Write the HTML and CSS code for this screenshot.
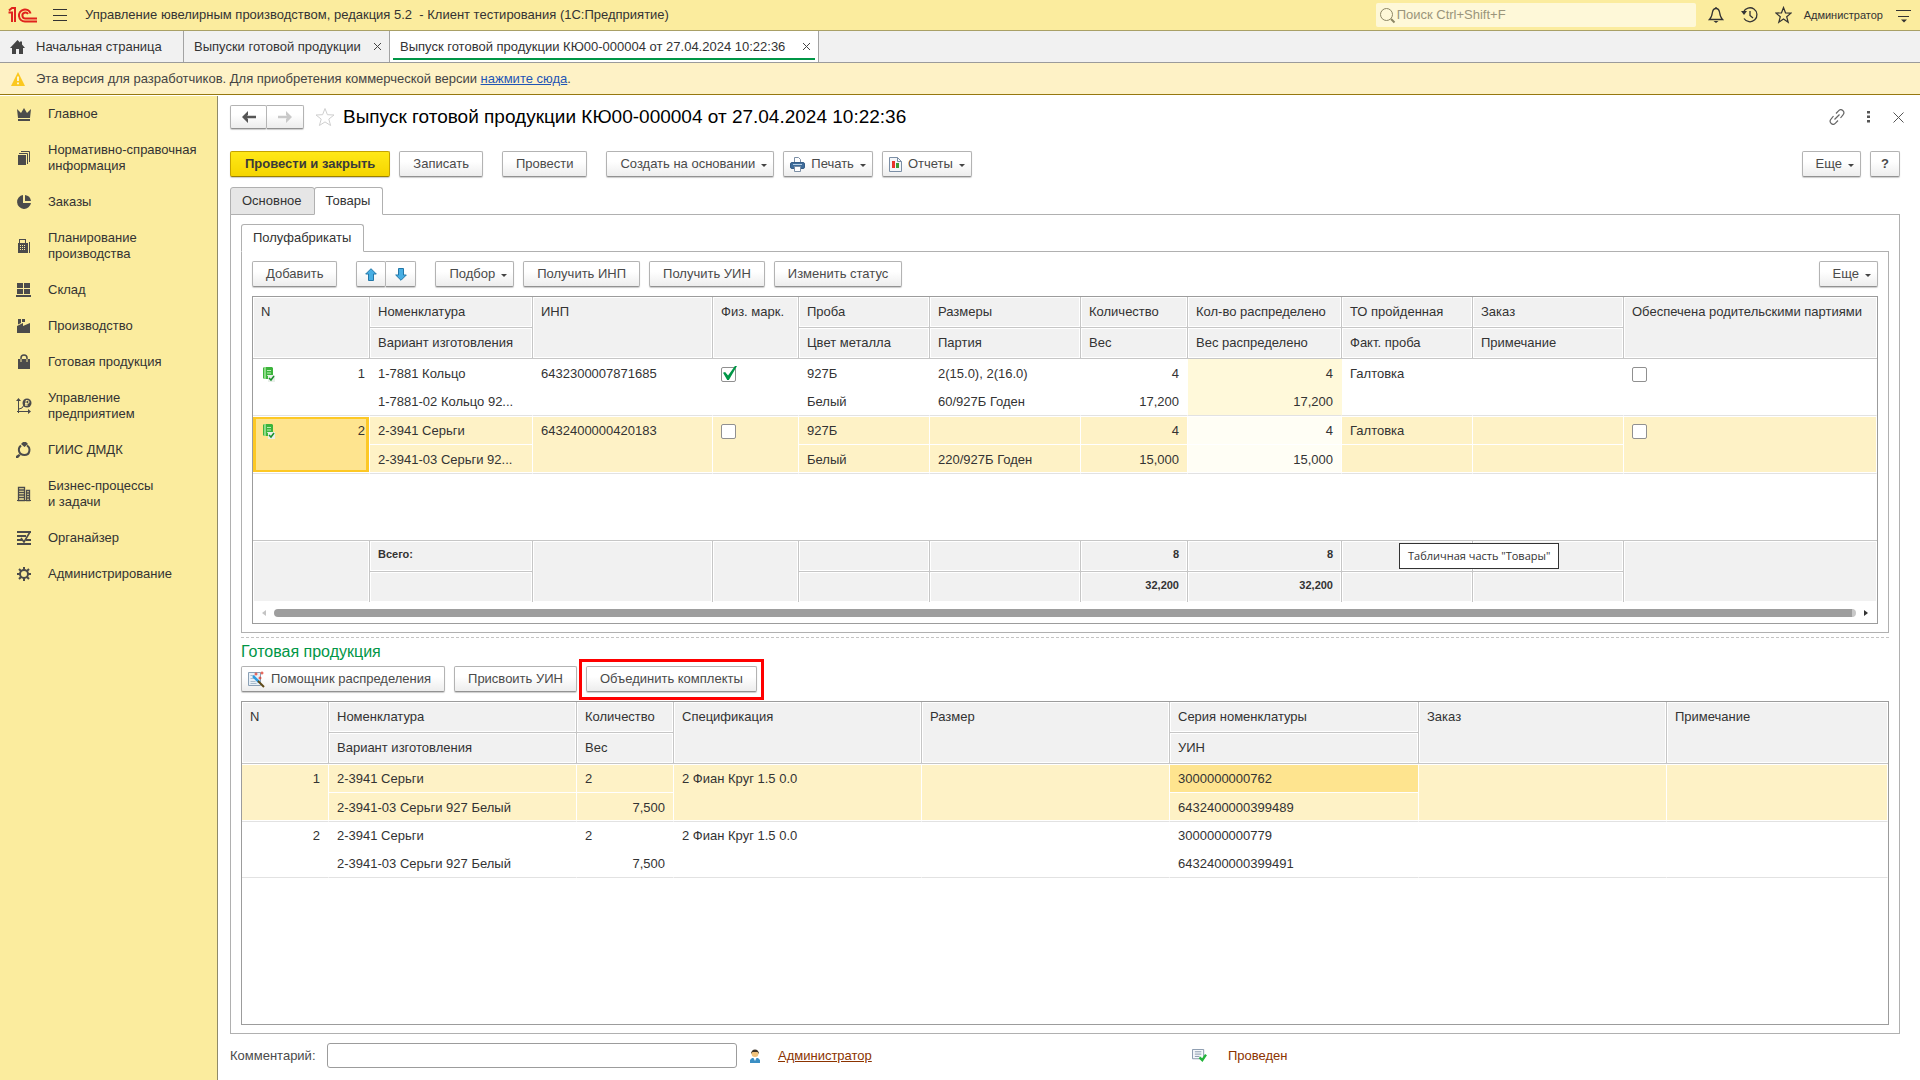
FILE: index.html
```html
<!DOCTYPE html>
<html lang="ru">
<head>
<meta charset="utf-8">
<title>Выпуск готовой продукции КЮ00-000004</title>
<link rel="stylesheet" href="styles.css">
</head>
<body>
<header class="topbar">
  <svg class="logo" width="30" height="16" viewBox="0 0 30 16" fill="none" stroke="#e0231c" stroke-width="2"><path d="M0.500 5.500h3.500v9.500M1 3.500L4 1h3v14M29 14.500H17a6 6 0 1 1 5.600-8M29 11.500H17.500a3 3 0 1 1 2.500-4.500"/></svg>
  <button class="icon-btn burger" aria-label="Меню"><svg width="16" height="14" viewBox="0 0 16 14" stroke="#333" stroke-width="1"><path d="M1 1.500h14M1 7.500h14M1 12.500h14"/></svg></button>
  <span class="app-title">Управление ювелирным производством, редакция 5.2 &nbsp;- Клиент тестирования (1С:Предприятие)</span>
  <div class="search">
    <svg width="17" height="17" viewBox="0 0 17 17" fill="none" stroke="#8c8665"><circle cx="7.500" cy="7.500" r="6"/><path d="M12 12l3.500 3.500" stroke-width="2"/></svg>
    <input type="text" aria-label="Поиск" placeholder="Поиск Ctrl+Shift+F">
  </div>
  <div class="top-icons">
    <button class="icon-btn" aria-label="Оповещения"><svg width="16" height="18" viewBox="0 0 16 18" fill="none" stroke="#333" stroke-width="1.300"><path d="M1.500 13.500h13c-2-2-2.500-4-3-7.500C11 3.500 10 2.500 8 2.500S5 3.500 4.500 6c-.5 3.500-1 5.500-3 7.500z"/><path d="M8 1v1.500"/><path d="M5.500 15h5L8 17z" fill="#333" stroke="none"/></svg></button>
    <button class="icon-btn" aria-label="История"><svg width="17" height="18" viewBox="0 0 17 18" fill="none" stroke="#333" stroke-width="1.300"><path d="M2.500 6A7 7 0 1 1 3 12.500"/><path d="M9 5v4.500l3 2.500"/><path d="M0 5h6L3 9z" fill="#333" stroke="none"/></svg></button>
    <button class="icon-btn" aria-label="Избранное"><svg width="17" height="18" viewBox="0 0 17 18" fill="none" stroke="#333" stroke-width="1.200"><path d="M8.500 1.500l2 5.300 5.500.3-4.300 3.600 1.500 5.600-4.700-3.200-4.700 3.200 1.500-5.600L1 7.100l5.500-.3z"/></svg></button>
  </div>
  <span class="user">Администратор</span>
  <button class="icon-btn" aria-label="Настройки"><svg width="16" height="16" viewBox="0 0 16 16"><path d="M1 3.500h15M3 9.500h11" stroke="#333"/><path d="M6 12.500h6l-3 3z" fill="#333"/></svg></button>
</header>

<nav class="tabs">
  <div class="tab home"><svg width="15" height="14" viewBox="0 0 15 14" fill="#444"><path d="M7.500 0l2.500 2.600V1.500h2v3.100L15 8h-2v6H9V9H6v5H2V8H0z"/></svg><button>Начальная страница</button></div>
  <div class="tab"><button>Выпуски готовой продукции</button><button class="tab-x" aria-label="Закрыть"><svg width="7" height="7" viewBox="0 0 7 7" stroke="#444"><path d="M0 0l7 7M7 0L0 7"/></svg></button></div>
  <div class="tab active"><button>Выпуск готовой продукции КЮ00-000004 от 27.04.2024 10:22:36</button><button class="tab-x" aria-label="Закрыть"><svg width="7" height="7" viewBox="0 0 7 7" stroke="#444"><path d="M0 0l7 7M7 0L0 7"/></svg></button></div>
</nav>

<div class="notice">
  <svg width="14" height="14" viewBox="0 0 14 14"><path d="M7 0l7 14H0z" fill="#fbc81f"/><path d="M7 4.500v4.500M7 10.500v1.700" stroke="#fff" stroke-width="1.600"/></svg>
  <span>Эта версия для разработчиков. Для приобретения коммерческой версии <a href="#">нажмите сюда</a>.</span>
</div>

<div class="workspace">
  <nav class="sidebar">
    <a href="#"><svg viewBox="0 0 16 16"><path d="M2 12L1 3l4 4 3-5 3 5 4-4-1 9zM2 13h12v2H2z"/></svg><span>Главное</span></a>
    <a href="#"><svg viewBox="0 0 16 16"><path d="M2 5h8v10H2z"/><path d="M3 3.500h8.500V14M5 1.500h8.500V12" fill="none" stroke="#4b4b4b"/></svg><span>Нормативно-справочная<br>информация</span></a>
    <a href="#"><svg viewBox="0 0 16 16"><path d="M7 1a7 7 0 1 0 8 8H7z"/><path d="M9 1a7 7 0 0 1 6 6H9z"/></svg><span>Заказы</span></a>
    <a href="#"><svg viewBox="0 0 16 16"><path fill-rule="evenodd" d="M2 5h1V1h7v4h2v10H2zM4 2v3h5V2zM4 7v1h1V7zm2 0v1h1V7zm2 0v1h1V7zM4 9v1h1V9zm2 0v1h1V9zm2 0v1h1V9zm-4 2v1h1v-1zm2 0v1h1v-1zm2 0v1h1v-1z"/><path d="M13 4h1v11h-1z"/></svg><span>Планирование<br>производства</span></a>
    <a href="#"><svg viewBox="0 0 16 16"><path d="M1 1h6v5H1zM8 1h6v5H8zM1 7h6v5H1zM8 7h6v5H8zM0 13h15v2H0z"/></svg><span>Склад</span></a>
    <a href="#"><svg viewBox="0 0 16 16"><path d="M1 15V8l6-3v3l7-3v10zM2 1h3v4L2 6.500zM6 1h3v3H6z"/></svg><span>Производство</span></a>
    <a href="#"><svg viewBox="0 0 16 16"><path d="M2 5h12v10H2z"/><path d="M5 5V4a3 3 0 0 1 6 0v1" fill="none" stroke="#4b4b4b" stroke-width="1.500"/><path d="M5 5v3M11 5v3" stroke="#fbec9e"/></svg><span>Готовая продукция</span></a>
    <a href="#"><svg viewBox="0 0 16 16"><path d="M2.500 1v14M1 13.500h13M3 11l3-1 2-3" fill="none" stroke="#4b4b4b"/><path d="M0 3l2.500-3L5 3zM12 11l3 2.500-3 2.500z"/><circle cx="11" cy="5" r="4.500"/><path d="M10 8V2.500h1.500a1.500 1.500 0 0 1 0 3H9M9 7h3" fill="none" stroke="#fbec9e"/></svg><span>Управление<br>предприятием</span></a>
    <a href="#"><svg viewBox="0 0 16 16"><path d="M5 2l2-2h3l2 2-3.500 3zM0 14l3-2 1.500 1.500L2 16H0z"/><path d="M5 3.500C1 7 3 13 8.500 13S15 6 11 3.500" fill="none" stroke="#4b4b4b" stroke-width="2"/></svg><span>ГИИС ДМДК</span></a>
    <a href="#"><svg viewBox="0 0 16 16"><path d="M1 14h14v1H1z"/><path d="M2.500 1.500h6v13h-6zM10.500 4.500h3v10h-3zM3 4h5M3 6.500h5M3 9h5M3 11.500h5M11 7h3M11 9.500h3M11 12h3" fill="none" stroke="#4b4b4b" stroke-width="1.300"/></svg><span>Бизнес-процессы<br>и задачи</span></a>
    <a href="#"><svg viewBox="0 0 16 16"><path d="M1 1h14v2H1zM1 5h9v2H1zM1 9h5v2H1zM10 9h5v2h-5zM1 13h14v2H1z"/><path d="M5 8l3 4 6-10" fill="none" stroke="#4b4b4b" stroke-width="1.600"/></svg><span>Органайзер</span></a>
    <a href="#"><svg viewBox="0 0 16 16"><circle cx="8" cy="8" r="4" fill="none" stroke="#4b4b4b" stroke-width="2"/><path d="M8 1v3M8 12v3M1 8h3M12 8h3M3 3l2 2M11 11l2 2M3 13l2-2M11 5l2-2" stroke="#4b4b4b" stroke-width="2"/></svg><span>Администрирование</span></a>
  </nav>

  <main class="form">
    <div class="form-head">
      <div class="btn-group">
        <button class="btn nav-btn" aria-label="Назад"><svg width="14" height="12" viewBox="0 0 14 12"><path d="M6 0L0 6l6 6V8L5 7.200h9V4.800H5L6 4z" fill="#555"/></svg></button>
        <button class="btn nav-btn" aria-label="Вперед"><svg width="14" height="12" viewBox="0 0 14 12"><path d="M8 0l6 6-6 6V8l1-.8H0V4.800h9L8 4z" fill="#c9c9c9"/></svg></button>
      </div>
      <svg class="fav" width="20" height="20" viewBox="0 0 20 20" fill="none" stroke="#cfcfcf"><path d="M10 1.500l2.400 6.200 6.600.3-5.200 4.100 1.800 6.400L10 14.900l-5.600 3.600 1.800-6.400L1 8l6.600-.3z"/></svg>
      <h1>Выпуск готовой продукции КЮ00-000004 от 27.04.2024 10:22:36</h1>
      <div class="head-icons">
        <button class="icon-btn" aria-label="Ссылка"><svg width="16" height="16" viewBox="0 0 16 16" fill="none" stroke="#666" stroke-width="1.200"><path d="M7 4.500l2.500-2.700a2.900 2.900 0 0 1 4.500 4L11.500 9M9 11.500l-2.500 2.700a2.900 2.900 0 0 1-4.500-4L4.500 7M5.500 10.500l5-5"/></svg></button>
        <button class="icon-btn" aria-label="Действия"><svg width="4" height="12" viewBox="0 0 4 12" fill="#555"><path d="M0 0h3v2.500H0zM0 4.500h3V7H0zM0 9h3v2.500H0z"/></svg></button>
        <button class="icon-btn" aria-label="Закрыть"><svg width="11" height="11" viewBox="0 0 11 11" stroke="#555"><path d="M.5.5l10 10M10.500.5l-10 10"/></svg></button>
      </div>
    </div>

    <div class="commands">
      <button class="btn primary">Провести и закрыть</button>
      <button class="btn wide-after">Записать</button>
      <button class="btn wide-after">Провести</button>
      <button class="btn menu">Создать на основании</button>
      <button class="btn menu with-icon"><svg width="15" height="15" viewBox="0 0 15 15"><path d="M4.500 7V.5h4l2 2V7" fill="#fff" stroke="#7b8ea5"/><rect x="0.500" y="5.500" width="14" height="6" rx="1.500" fill="#3f6d9b" stroke="#355d87"/><path d="M3 7.500h9" stroke="#b8d0e6"/><path d="M4.500 9.500h6v5h-6z" fill="#fff" stroke="#7b8ea5"/></svg>Печать</button>
      <button class="btn menu with-icon"><svg width="13" height="15" viewBox="0 0 13 15"><path d="M.5.5h8l4 4v10H.5z" fill="#f4f6f9" stroke="#7b8ea5"/><path d="M8.500.5v4h4" fill="none" stroke="#7b8ea5"/><path d="M3 4h3v7H3z" fill="#e8352b"/><path d="M7 6h3v5H7z" fill="#3d9a35"/></svg>Отчеты</button>
      <span class="spacer"></span>
      <button class="btn menu">Еще</button>
      <button class="btn help">?</button>
    </div>

    <div class="page-tabs"><button>Основное</button><button class="active">Товары</button></div>
    <section class="page">
      <div class="page-tabs"><button class="active">Полуфабрикаты</button></div>
      <section class="page inner">
        <div class="commands table-cmds">
          <button class="btn wide-after">Добавить</button>
          <div class="btn-group wide-after">
            <button class="btn move" aria-label="Вверх"><svg width="12" height="13" viewBox="0 0 12 13"><path d="M6 .7L11.300 6H8.500v6.500h-5V6H.7z" fill="#47aee3" stroke="#2377a8"/></svg></button>
            <button class="btn move" aria-label="Вниз"><svg width="12" height="13" viewBox="0 0 12 13"><path d="M6 12.300L11.300 7H8.500V.5h-5V7H.7z" fill="#47aee3" stroke="#2377a8"/></svg></button>
          </div>
          <button class="btn menu">Подбор</button>
          <button class="btn">Получить ИНП</button>
          <button class="btn">Получить УИН</button>
          <button class="btn">Изменить статус</button>
          <span class="spacer"></span>
          <button class="btn menu">Еще</button>
        </div>

        <div class="grid">
          <table>
            <colgroup><col class="w117"><col class="w163"><col class="w180"><col class="w86"><col class="w131"><col class="w151"><col class="w107"><col class="w154"><col class="w131"><col class="w151"><col></colgroup>
            <thead>
              <tr><th rowspan="2">N</th><th>Номенклатура</th><th rowspan="2">ИНП</th><th rowspan="2">Физ. марк.</th><th>Проба</th><th>Размеры</th><th>Количество</th><th>Кол-во распределено</th><th>ТО пройденная</th><th>Заказ</th><th rowspan="2">Обеспечена родительскими партиями</th></tr>
              <tr><th>Вариант изготовления</th><th>Цвет металла</th><th>Партия</th><th>Вес</th><th>Вес распределено</th><th>Факт. проба</th><th>Примечание</th></tr>
            </thead>
            <tbody class="rec">
              <tr><td rowspan="2" class="last"><div class="num-cell"><svg width="13" height="16" viewBox="0 0 13 16"><path d="M2 1h8l1 1v11H2L1 12V2z" fill="#3cb43c"/><path d="M2 1h2v12H2z" fill="#8edb88"/><path d="M5 4.500h4M5 7h4M5 9.500h3" stroke="#b9f0b2"/><path d="M6 9h7v7H6z" fill="#e9efe9"/><path d="M7 12l2 2 3-4" fill="none" stroke="#1b8f2c" stroke-width="1.500"/></svg><span>1</span></div></td><td>1-7881 Кольцо</td><td rowspan="2" class="last">6432300007871685</td><td rowspan="2" class="last"><input type="checkbox" aria-label="Физ. марк." checked></td><td>927Б</td><td>2(15.0), 2(16.0)</td><td class="r">4</td><td class="r tint">4</td><td>Галтовка</td><td></td><td rowspan="2" class="last"><input type="checkbox" aria-label="Обеспечена родительскими партиями"></td></tr>
              <tr class="end"><td>1-7881-02 Кольцо 92...</td><td>Белый</td><td>60/927Б Годен</td><td class="r">17,200</td><td class="r tint">17,200</td><td></td><td></td></tr>
            </tbody>
            <tbody class="rec selected">
              <tr><td rowspan="2" class="last current"><div class="num-cell"><svg width="13" height="16" viewBox="0 0 13 16"><path d="M2 1h8l1 1v11H2L1 12V2z" fill="#3cb43c"/><path d="M2 1h2v12H2z" fill="#8edb88"/><path d="M5 4.500h4M5 7h4M5 9.500h3" stroke="#b9f0b2"/><path d="M6 9h7v7H6z" fill="#e9efe9"/><path d="M7 12l2 2 3-4" fill="none" stroke="#1b8f2c" stroke-width="1.500"/></svg><span>2</span></div></td><td>2-3941 Серьги</td><td rowspan="2" class="last">6432400000420183</td><td rowspan="2" class="last"><input type="checkbox" aria-label="Физ. марк."></td><td>927Б</td><td></td><td class="r">4</td><td class="r tint">4</td><td>Галтовка</td><td></td><td rowspan="2" class="last"><input type="checkbox" aria-label="Обеспечена родительскими партиями"></td></tr>
              <tr class="end"><td>2-3941-03 Серьги 92...</td><td>Белый</td><td>220/927Б Годен</td><td class="r">15,000</td><td class="r tint">15,000</td><td></td><td></td></tr>
            </tbody>
          </table>
          <div class="grid-space"></div>
          <table class="totals">
            <colgroup><col class="w117"><col class="w163"><col class="w180"><col class="w86"><col class="w131"><col class="w151"><col class="w107"><col class="w154"><col class="w131"><col class="w151"><col></colgroup>
            <tbody>
              <tr><th rowspan="2"></th><th>Всего:</th><th rowspan="2"></th><th rowspan="2"></th><th></th><th></th><th class="r">8</th><th class="r">8</th><th></th><th></th><th rowspan="2"></th></tr>
              <tr><th></th><th></th><th></th><th class="r">32,200</th><th class="r">32,200</th><th></th><th></th></tr>
            </tbody>
          </table>
          <div class="scroll">
            <svg width="4" height="6" viewBox="0 0 4 6"><path d="M4 0v6L0 3z" fill="#c4c4c4"/></svg>
            <div class="thumb"></div>
            <svg width="4" height="6" viewBox="0 0 4 6"><path d="M0 0v6l4-3z" fill="#333"/></svg>
          </div>
          <div class="tooltip">Табличная часть "Товары"</div>
        </div>
      </section>

      <h2>Готовая продукция</h2>
      <div class="commands product-cmds">
        <button class="btn with-icon"><svg width="17" height="17" viewBox="0 0 17 17"><path d="M.5 1.500h12v13H.5z" fill="#e8f0f7" stroke="#8ba0b5"/><path d="M2.500 4.500h4M2.500 7.500h4M2.500 10.500h5M2.500 12.500h6" stroke="#a9bccd"/><path d="M5 5l6 6" stroke="#2c9be0" stroke-width="2.500"/><path d="M10 10l6 6" stroke="#5f4a18" stroke-width="2"/><path d="M8 1.500v3M6.500 3h3M14 .5v3M12.500 2h3M12 5.500v3M10.500 7h3" stroke="#e03a2a"/></svg>Помощник распределения</button>
        <button class="btn">Присвоить УИН</button>
        <span class="marked"><button class="btn">Объединить комплекты</button></span>
      </div>
      <div class="grid products">
        <table>
          <colgroup><col class="w87"><col class="w248"><col class="w97"><col class="w248"><col class="w248"><col class="w249"><col class="w248"><col></colgroup>
          <thead>
            <tr><th rowspan="2">N</th><th>Номенклатура</th><th>Количество</th><th rowspan="2">Спецификация</th><th rowspan="2">Размер</th><th>Серия номенклатуры</th><th rowspan="2">Заказ</th><th rowspan="2">Примечание</th></tr>
            <tr><th>Вариант изготовления</th><th>Вес</th><th>УИН</th></tr>
          </thead>
          <tbody class="rec selected">
            <tr><td rowspan="2" class="last r">1</td><td>2-3941 Серьги</td><td>2</td><td rowspan="2" class="last">2 Фиан Круг 1.5 0.0</td><td rowspan="2" class="last"></td><td class="hot">3000000000762</td><td rowspan="2" class="last"></td><td rowspan="2" class="last"></td></tr>
            <tr class="end"><td>2-3941-03 Серьги 927 Белый</td><td class="r">7,500</td><td>6432400000399489</td></tr>
          </tbody>
          <tbody class="rec">
            <tr><td rowspan="2" class="last r">2</td><td>2-3941 Серьги</td><td>2</td><td rowspan="2" class="last">2 Фиан Круг 1.5 0.0</td><td rowspan="2" class="last"></td><td>3000000000779</td><td rowspan="2" class="last"></td><td rowspan="2" class="last"></td></tr>
            <tr class="end"><td>2-3941-03 Серьги 927 Белый</td><td class="r">7,500</td><td>6432400000399491</td></tr>
          </tbody>
        </table>
      </div>
    </section>

    <footer class="form-foot">
      <div class="foot-left">
        <label for="comment">Комментарий:</label>
        <input id="comment" type="text">
        <svg width="10" height="14" viewBox="0 0 10 14"><path d="M0 14v-3l2-2h6l2 2v3z" fill="#3b8fc4"/><path d="M3.500 9h3L5 12z" fill="#fff"/><circle cx="5" cy="4.500" r="3.500" fill="#f0c27b"/><path d="M1 5a4 4.500 0 0 1 8 0L7.500 3h-5z" fill="#3b3226"/></svg>
        <a href="#">Администратор</a>
      </div>
      <div class="foot-right">
        <svg width="15" height="13" viewBox="0 0 16 14"><path d="M.5.5h12v10H.5z" fill="#f6f8fb" stroke="#8292a8"/><path d="M3 3h7M3 5.500h7M3 8h5" stroke="#8292a8"/><path d="M8 9l3 3 4-6" fill="none" stroke="#22b43a" stroke-width="2.500"/></svg>
        <span>Проведен</span>
      </div>
    </footer>
  </main>
</div>
</body>
</html>
```
FILE: styles.css
```css
:root {
  --yellow: #fbec9e;
  --pale: #fef2c6;
  --line: #b0b0b0;
  --grid-line: #c6c6c6;
  --ink: #333;
}
* { box-sizing: border-box; }
body {
  margin: 0;
  min-height: 100vh;
  display: flex;
  flex-direction: column;
  font: 13px/16px "Liberation Sans", Arial, sans-serif;
  color: var(--ink);
  background: #fff;
}
button, input { font: inherit; color: inherit; }
button { margin: 0; padding: 0; border: 0; background: none; white-space: nowrap; }
svg { display: block; flex: none; }
.icon-btn { display: flex; align-items: center; }
.spacer { flex: 1; }

/* Title bar */
.topbar {
  display: flex;
  align-items: center;
  height: 31px;
  padding: 0 9px 0 8px;
  background: var(--yellow);
  border-bottom: 1px solid #a9a066;
}
.burger { margin: 0 17px 0 14px; }
.app-title { flex: 1; white-space: nowrap; }
.search {
  display: flex;
  align-items: center;
  width: 320px;
  height: 24px;
  padding-left: 3px;
  border-radius: 2px;
  background: #fef8d8;
}
.search input { flex: 1; min-width: 0; padding: 0 1px; border: 0; background: none; outline: 0; }
.search input::placeholder { color: #9a957b; }
.top-icons { display: flex; gap: 17px; margin: 0 12px; }
.user { margin-right: 12px; font-size: 11px; }

/* Window tabs */
.tabs { display: flex; height: 32px; background: #f1f1f1; border-bottom: 1px solid #9b9b9b; }
.tab {
  display: flex;
  align-items: center;
  justify-content: space-between;
  min-width: 206px;
  padding: 0 8px 0 10px;
  border-right: 1px solid #a3a3a3;
}
.tab.home { justify-content: flex-start; gap: 11px; min-width: 184px; }
.tab-x { padding: 4px 0 4px 9px; }
.tab.active {
  min-width: 429px;
  background: linear-gradient(#009646, #009646) 50% 27px / calc(100% - 6px) 2px no-repeat #fff;
}

.notice {
  display: flex;
  align-items: center;
  gap: 11px;
  height: 32px;
  padding-left: 11px;
  background: var(--pale);
  border-bottom: 1px solid #96780f;
  color: #444;
}
.notice a { color: #1f55b5; }

.workspace { flex: 1; display: flex; padding-top: 1px; }

/* Sections */
.sidebar { flex: none; width: 218px; background: var(--yellow); border-right: 1px solid #8f8a68; }
.sidebar a {
  display: flex;
  align-items: center;
  gap: 16px;
  padding: 10px 0 10px 16px;
  color: var(--ink);
  text-decoration: none;
  white-space: nowrap;
}
.sidebar svg { width: 16px; height: 16px; fill: #4b4b4b; }

/* Form */
.form { flex: 1; min-width: 0; display: flex; flex-direction: column; padding: 8px 20px 12px 12px; }
.form-head { display: flex; align-items: center; height: 26px; }
.fav { margin: 0 8px 0 11px; }
h1 { margin: 0; font-size: 19px; line-height: 24px; font-weight: 400; color: #000; white-space: nowrap; }
.head-icons { display: flex; align-items: center; gap: 22px; margin: 0 -4px 0 auto; }

.btn {
  display: inline-flex;
  align-items: center;
  justify-content: center;
  height: 26px;
  padding: 0 13px;
  border: 1px solid #b3b3b3;
  border-bottom-color: #929292;
  border-radius: 2px;
  box-shadow: 0 1px 1px #ccc;
  background: linear-gradient(#fff 40%, #ededed);
  color: #4a4a4a;
}
.btn-group { display: flex; }
.btn-group .btn { padding: 0; }
.btn-group .btn + .btn { border-left: 0; border-radius: 0 2px 2px 0; }
.nav-btn { width: 37px; height: 24px; }
.move { width: 30px; }
.primary {
  padding: 0 14px;
  border-color: #c4a200;
  border-bottom-color: #9a8000;
  background: linear-gradient(#ffe817, #f5d500);
  color: #3a3a3a;
  font-weight: 700;
}
.with-icon { padding-left: 6px; }
.with-icon svg { margin-right: 6px; }
.menu { padding-right: 6px; }
.menu::after {
  content: "";
  margin: 3px 0 0 6px;
  border: 3px solid transparent;
  border-top-color: #444;
  border-bottom: 0;
}
.help { width: 30px; font-weight: 700; }
.commands { display: flex; align-items: center; gap: 9px; }
.form-head + .commands { margin: 21px 0 10px; }
.wide-after { margin-right: 10px; }

.page-tabs { display: flex; position: relative; margin-bottom: -1px; }
.page-tabs button {
  height: 28px;
  padding: 0 12px 1px 11px;
  border: 1px solid var(--line);
  border-radius: 3px 3px 0 0;
  background: #e6e6e6;
}
.page-tabs button.active { border-bottom-color: #fff; background: #fff; }
.page-tabs button + button { margin-left: -1px; }
.page {
  flex: 1;
  display: flex;
  flex-direction: column;
  padding: 9px 10px 8px;
  border: 1px solid var(--line);
}
.page.inner { flex: none; }
.table-cmds { margin-bottom: 9px; }

/* Data grids */
.grid { position: relative; border: 1px solid #9c9c9c; background: #fff; }
table { width: 100%; table-layout: fixed; border-collapse: separate; border-spacing: 0; }
th, td {
  height: 28px;
  padding: 7px 8px 0;
  vertical-align: top;
  text-align: left;
  font-weight: 400;
  white-space: nowrap;
  overflow: hidden;
}
th {
  height: 31px;
  border: solid var(--grid-line);
  border-width: 0 1px 1px 0;
  background: #f1f1f1;
  box-shadow: inset 0 0 0 1px #fff;
}
th:last-child { border-right-width: 0; padding-right: 0; }
thead tr + tr th:last-child, .totals tr + tr th:last-child { border-right-width: 1px; padding-right: 8px; }
.r { text-align: right; }
.rec td { border-right: 1px solid transparent; }
.rec td.last, .rec .end td { border-bottom: 1px solid #e2e2e2; }
.rec .end td { height: 29px; }
.tint { background: #fff9da; }
.selected td { height: 29px; background: var(--pale); }
.rec.selected td { border-right-color: #fff; box-shadow: inset 0 1px #fff, inset 0 -1px #fff; }
.rec.selected .end td { box-shadow: inset 0 -1px #fff; }
.selected + .rec tr:first-child td { height: 27px; padding-top: 6px; }
.rec.selected .tint { background: #fffef5; }
.rec.selected .hot, .rec.selected .current { background: #fee48f; }
.rec.selected .current { box-shadow: inset 0 1px #fff, inset 0 -1px #fff, inset 0 0 0 3px #fdc825; }
.num-cell { display: flex; justify-content: space-between; margin-right: -4px; }
.num-cell svg { margin-left: 1px; }
.w86 { width: 86px; } .w87 { width: 87px; } .w97 { width: 97px; } .w107 { width: 107px; }
.w117 { width: 117px; } .w131 { width: 131px; } .w151 { width: 151px; } .w154 { width: 154px; }
.w163 { width: 163px; } .w180 { width: 180px; } .w248 { width: 248px; } .w249 { width: 249px; }

input[type="checkbox"] {
  appearance: none;
  position: relative;
  display: block;
  width: 15px;
  height: 15px;
  margin: 1px 0 0;
  border: 1px solid #909090;
  border-radius: 2px;
  background: #fff;
}
input[type="checkbox"]:checked::before {
  content: "";
  position: absolute;
  inset: -2px -2px 1px 1px;
  background: #009646;
  clip-path: polygon(0 48%, 15% 42%, 36% 68%, 85% 0, 100% 0, 42% 100%, 30% 100%);
}

.grid-space { height: 66px; }
.totals { border-top: 1px solid var(--grid-line); }
.totals th { font-size: 11px; font-weight: 700; padding-top: 5px; }
.totals tr + tr th, .totals th[rowspan] { border-bottom: 0; }
.totals tr + tr th { height: 30px; }
.scroll { display: flex; align-items: center; height: 21px; padding: 0 9px; gap: 8px; }
.thumb { flex: 1; height: 8px; border-radius: 4px; background: #9e9e9e; border-right: 4px solid #c8c8c8; }
.tooltip {
  position: absolute;
  left: 1146px;
  top: 246px;
  padding: 4px 8px;
  border: 1px solid var(--ink);
  background: #fff;
  font: 11px/16px "Open Sans", sans-serif;
}

h2 {
  margin: 4px 0;
  padding-top: 4px;
  border-top: 1px dashed #c4c4c4;
  font-size: 16px;
  line-height: 20px;
  font-weight: 400;
  color: #009646;
}
.product-cmds { margin-bottom: 9px; }
.marked { position: relative; display: flex; }
.marked::after {
  content: "";
  position: absolute;
  inset: -7px -7px -8px;
  border: 3px solid #f00;
  pointer-events: none;
}
.products { flex: 1; }

.form-foot { display: flex; align-items: center; padding-top: 9px; }
.foot-left { flex: 962 1 0; display: flex; align-items: center; }
.foot-left label { width: 97px; color: #4a4a4a; }
.foot-left input { width: 410px; height: 25px; border: 1px solid #9c9c9c; border-radius: 3px; }
.foot-left svg { margin: 0 18px 0 13px; }
.foot-left a { color: #8b3300; }
.foot-right { flex: 708 1 0; display: flex; align-items: center; gap: 21px; color: #8b3300; }
```
